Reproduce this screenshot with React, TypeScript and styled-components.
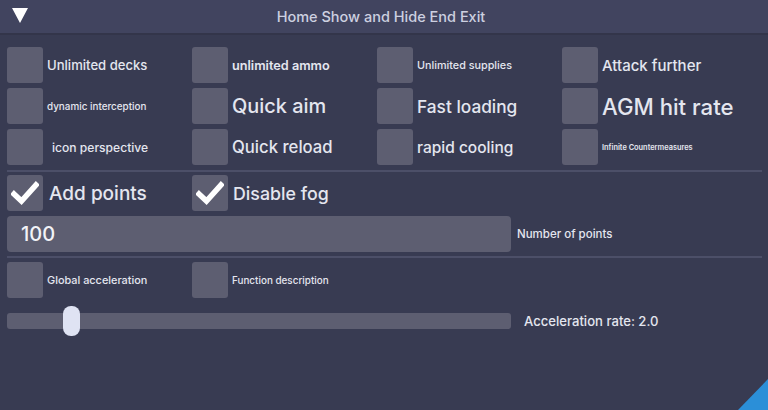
import React from "react";
import styled, { createGlobalStyle } from "styled-components";

const GlobalStyle = createGlobalStyle`
  html, body {
    margin: 0;
    padding: 0;
    background: #383b52;
  }
  body {
    font-family: "Inter", "Noto Sans", sans-serif;
  }
`;

const Window = styled.div`
  position: relative;
  width: 768px;
  height: 410px;
  overflow: hidden;
  background: #383b52;
  color: #e4e6ef;
`;

const TitleBar = styled.div`
  position: relative;
  height: 33px;
  background: #41445f;
  border-bottom: 2px solid #33354a;
  display: flex;
  align-items: center;
  justify-content: center;
`;

const Collapse = styled.div`
  position: absolute;
  left: 12px;
  top: 8px;
  width: 0;
  height: 0;
  border-left: 8px solid transparent;
  border-right: 8px solid transparent;
  border-top: 15px solid #ffffff;
`;

const Title = styled.span`
  font-size: 14.5px;
  font-weight: 500;
  color: #cdd0e0;
  margin-left: -6px;
`;

const Body = styled.div`
  padding: 12px 6px 0 7px;
  display: flex;
  flex-direction: column;
`;

const Grid = styled.div`
  display: grid;
  grid-template-columns: repeat(4, 185px);
  row-gap: 5px;
`;

const Cell = styled.div`
  display: flex;
  align-items: center;
  height: 36px;
  gap: 4px;
`;

const Box = styled.div`
  width: 36px;
  height: 36px;
  flex: none;
  border-radius: 3px;
  background: #5d5e71;
  display: flex;
  align-items: center;
  justify-content: center;
`;

const Label = styled.span<{ $size: number; $weight?: number; $indent?: number }>`
  font-size: ${(p) => p.$size}px;
  font-weight: ${(p) => p.$weight ?? 500};
  padding-left: ${(p) => p.$indent ?? 0}px;
  white-space: nowrap;
  color: #e4e6ef;
`;

const Separator = styled.div<{ $top: number; $bottom: number }>`
  height: 2px;
  background: #4c4f68;
  margin: ${(p) => p.$top}px 0 ${(p) => p.$bottom}px;
`;

const Row = styled.div`
  display: flex;
  align-items: center;
  gap: 6px;
  margin-top: 5px;
`;

const Input = styled.div`
  width: 504px;
  height: 36px;
  border-radius: 4px;
  background: #5d5e71;
  display: flex;
  align-items: center;
  padding-left: 14px;
  box-sizing: border-box;
  font-size: 20px;
  font-weight: 500;
  color: #f2f3f7;
`;

const SliderRow = styled.div`
  display: flex;
  align-items: center;
  gap: 13px;
  height: 30px;
  margin-top: 8px;
`;

const Track = styled.div`
  position: relative;
  width: 504px;
  height: 16px;
  border-radius: 3px;
  background: #5d5e71;
`;

const Grab = styled.div`
  position: absolute;
  left: 56px;
  top: -7px;
  width: 17px;
  height: 30px;
  border-radius: 8px;
  background: #dfe3f3;
`;

const Grip = styled.div`
  position: absolute;
  right: 0;
  bottom: 0;
  width: 0;
  height: 0;
  border-left: 30px solid transparent;
  border-bottom: 31px solid #2b8fd8;
`;

const Check = () => (
  <svg width="28" height="24" viewBox="0 0 28 24">
    <path
      d="M3 13 L10.5 20 L25 4"
      fill="none"
      stroke="#ffffff"
      strokeWidth="5.5"
      strokeLinecap="square"
      strokeLinejoin="miter"
    />
  </svg>
);

type Option = { label: string; size: number; weight?: number; indent?: number };

const options: Option[] = [
  { label: "Unlimited decks", size: 13.1 },
  { label: "unlimited ammo", size: 12.7, weight: 600 },
  { label: "Unlimited supplies", size: 10.8 },
  { label: "Attack further", size: 15 },
  { label: "dynamic interception", size: 9.9 },
  { label: "Quick aim", size: 19.9 },
  { label: "Fast loading", size: 17.3 },
  { label: "AGM hit rate", size: 22.2 },
  { label: "icon perspective", size: 12.1, indent: 5 },
  { label: "Quick reload", size: 16.7 },
  { label: "rapid cooling", size: 15.5 },
  { label: "Infinite Countermeasures", size: 7.4, weight: 600 },
];

const App: React.FC = () => (
  <Window>
    <GlobalStyle />
    <TitleBar>
      <Collapse />
      <Title>Home Show and Hide End Exit</Title>
    </TitleBar>
    <Body>
      <Grid>
        {options.map((o) => (
          <Cell key={o.label}>
            <Box />
            <Label $size={o.size} $weight={o.weight} $indent={o.indent}>
              {o.label}
            </Label>
          </Cell>
        ))}
      </Grid>
      <Separator $top={5} $bottom={3} />
      <Grid>
        <Cell>
          <Box>
            <Check />
          </Box>
          <Label $size={19} $indent={2}>Add points</Label>
        </Cell>
        <Cell>
          <Box>
            <Check />
          </Box>
          <Label $size={17.8} $indent={1}>Disable fog</Label>
        </Cell>
      </Grid>
      <Row>
        <Input>100</Input>
        <Label $size={11.5}>Number of points</Label>
      </Row>
      <Separator $top={4} $bottom={4} />
      <Grid>
        <Cell>
          <Box />
          <Label $size={10.9}>Global acceleration</Label>
        </Cell>
        <Cell>
          <Box />
          <Label $size={9.9} $indent={-2}>Function description</Label>
        </Cell>
      </Grid>
      <SliderRow>
        <Track>
          <Grab />
        </Track>
        <Label $size={13.1}>Acceleration rate: 2.0</Label>
      </SliderRow>
    </Body>
    <Grip />
  </Window>
);

export default App;
